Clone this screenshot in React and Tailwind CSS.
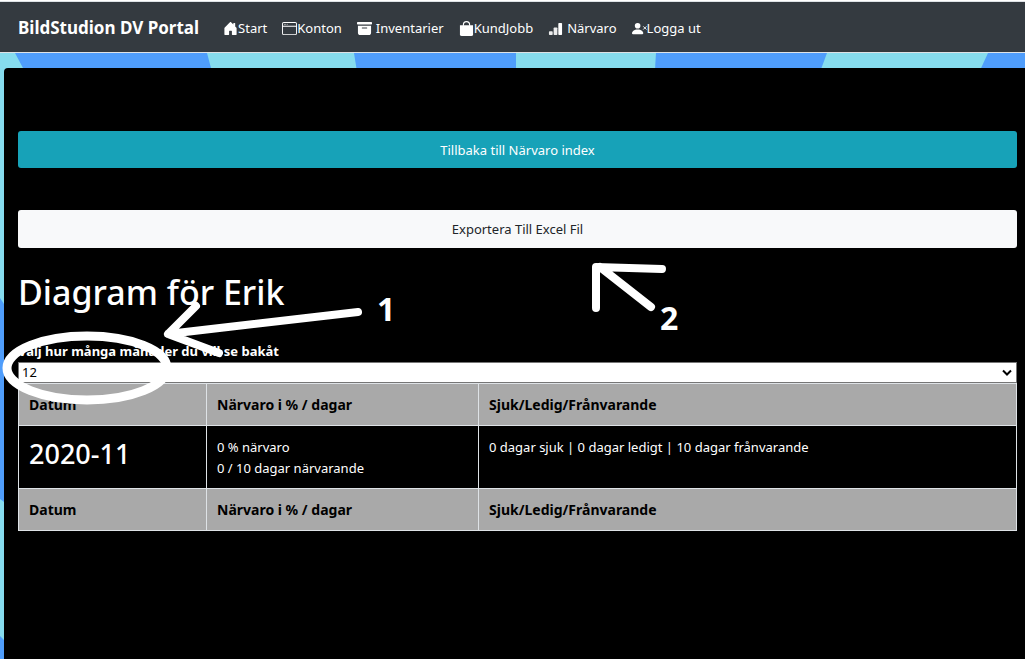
import React from "react";
import { BsHouseDoorFill, BsWindow, BsArchiveFill } from "react-icons/bs";

function BagIcon(props) {
  return (
    <svg viewBox="0 0 16 16" fill="currentColor" {...props}>
      <path d="M1 4.5h14V14a2 2 0 0 1-2 2H3a2 2 0 0 1-2-2z" />
      <path d="M4.7 5V4a3.3 3.3 0 0 1 6.6 0v1" fill="none" stroke="currentColor" strokeWidth="1.2" />
    </svg>
  );
}

function BarsIcon(props) {
  return (
    <svg viewBox="0 0 16 16" fill="currentColor" {...props}>
      <rect x="1" y="11" width="4" height="4" rx="0.8" opacity="0.9" />
      <rect x="6" y="7" width="4" height="8" rx="0.8" opacity="0.9" />
      <rect x="11" y="2" width="4" height="13" rx="0.8" />
    </svg>
  );
}

function PersonXIcon(props) {
  return (
    <svg viewBox="0 0 16 16" fill="currentColor" {...props}>
      <circle cx="6" cy="5" r="3" />
      <path d="M1 14s-1 0-1-1 1-4 6-4 6 3 6 4-1 1-1 1z" />
      <path d="M12 5.7l3.4 3.4M15.4 5.7L12 9.1" fill="none" stroke="currentColor" strokeWidth="1" />
    </svg>
  );
}

const links = [
  { label: "Start", Icon: BsHouseDoorFill, gap: "gap-0" },
  { label: "Konton", Icon: BsWindow, gap: "gap-0" },
  { label: "Inventarier", Icon: BsArchiveFill, gap: "gap-1" },
  { label: "KundJobb", Icon: BagIcon, gap: "gap-0" },
  { label: "Närvaro", Icon: BarsIcon, gap: "gap-1" },
  { label: "Logga ut", Icon: PersonXIcon, gap: "gap-0" },
];

const columns = ["Datum", "Närvaro i % / dagar", "Sjuk/Ledig/Frånvarande"];

function Navbar() {
  return (
    <nav className="flex h-[52px] items-center border-y border-[#dee2e6] bg-[#343a40] px-[18px] pt-[2px] text-white">
      <a href="#" className="mr-6 text-[17px] leading-6 font-bold">
        BildStudion DV Portal
      </a>
      <ul className="flex items-center gap-[15px] text-[13px] leading-5">
        {links.map(({ label, Icon, gap }) => (
          <li key={label}>
            <a href="#" className={`flex items-center ${gap}`}>
              <Icon className="size-[15px]" aria-hidden="true" />
              {label}
            </a>
          </li>
        ))}
      </ul>
    </nav>
  );
}

function Backdrop() {
  return (
    <svg className="absolute inset-0 size-full" viewBox="0 0 1025 606" preserveAspectRatio="xMinYMin slice" aria-hidden="true">
      <rect width="1025" height="606" fill="#86dcee" />
      <g fill="#4f9dfb">
        <path d="M15 0H207L211 15L240 120H80L23 15Z" />
        <path d="M354 0H516V100H370Z" />
        <path d="M656 0H827L790 100H650Z" />
        <path d="M988 0H1025V100H942Z" />
        <path d="M0 245L4 251V449L0 446Z" />
        <path d="M0 583L4 587V606H0Z" />
      </g>
    </svg>
  );
}

function LabelRow() {
  return (
    <tr className="bg-[#a9a9a9] text-black">
      {columns.map((name) => (
        <th key={name} scope="col" className="border border-[#dee2e6] p-[10px] text-left text-[14px] font-bold">
          {name}
        </th>
      ))}
    </tr>
  );
}

function Annotations() {
  return (
    <div className="pointer-events-none absolute top-0 left-0 text-[32px] leading-8 font-bold" aria-hidden="true">
      <svg className="absolute top-0 left-0" width="700" height="420" fill="none" stroke="#fff" strokeWidth="8" strokeLinecap="round" strokeLinejoin="round">
        <ellipse cx="87" cy="368" rx="80" ry="32" strokeWidth="9" />
        <path d="M196 306L168 334L358 312M168 334L219 353" />
        <path d="M596 308V267L662 269M600 267L651 307" />
      </svg>
      <span className="absolute top-[293px] left-[377px]">1</span>
      <span className="absolute top-[302px] left-[660px]">2</span>
    </div>
  );
}

export default function App() {
  return (
    <div className="relative flex min-h-screen flex-col overflow-hidden bg-white pt-px font-['Noto_Sans','Open_Sans',sans-serif] text-[13px] leading-[21px] text-white">
      <Navbar />
      <div className="relative flex grow flex-col pt-[15px] pl-1">
        <Backdrop />
        <main className="relative grow rounded-tl bg-black pt-[63px] pr-2 pl-[14px]">
          <button type="button" className="block h-[37px] w-full rounded-[3px] bg-[#17a2b8] pt-px">
            Tillbaka till Närvaro index
          </button>
          <button type="button" className="mt-[42px] block h-[38px] w-full rounded-[3px] bg-[#f8f9fa] text-[#212529]">
            Exportera Till Excel Fil
          </button>
          <h1 className="mt-6 text-[34px] leading-10 font-medium">Diagram för Erik</h1>
          <label htmlFor="months" className="mt-[29px] block font-bold">
            Välj hur många månader du vill se bakåt
          </label>
          <div className="relative">
            <select id="months" defaultValue="12" className="block h-[21px] w-full appearance-none border border-[#767676] bg-white px-[3px] text-[13px] leading-[19px] text-black">
              <option>6</option>
              <option>12</option>
              <option>24</option>
            </select>
            <svg className="pointer-events-none absolute top-[7px] right-[5px]" width="10" height="8" viewBox="0 0 10 8" fill="none" stroke="#000" strokeWidth="2" aria-hidden="true">
              <path d="M1 1.5L5 5.5L9 1.5" />
            </svg>
          </div>
          <table className="w-full table-fixed border-collapse">
            <colgroup>
              <col className="w-[188px]" />
              <col className="w-[272px]" />
              <col />
            </colgroup>
            <thead>
              <LabelRow />
            </thead>
            <tbody>
              <tr className="align-top">
                <td className="border border-[#dee2e6] px-[10px] pt-[11px] pb-[9px]">
                  <h2 className="text-[27px] leading-[34px] font-medium">2020-11</h2>
                </td>
                <td className="border border-[#dee2e6] px-[10px] pt-[11px] pb-[9px]">
                  0 % närvaro
                  <br />0 / 10 dagar närvarande
                </td>
                <td className="border border-[#dee2e6] px-[10px] pt-[11px] pb-[9px]">
                  0 dagar sjuk | 0 dagar ledigt | 10 dagar frånvarande
                </td>
              </tr>
            </tbody>
            <tfoot>
              <LabelRow />
            </tfoot>
          </table>
        </main>
      </div>
      <Annotations />
    </div>
  );
}
